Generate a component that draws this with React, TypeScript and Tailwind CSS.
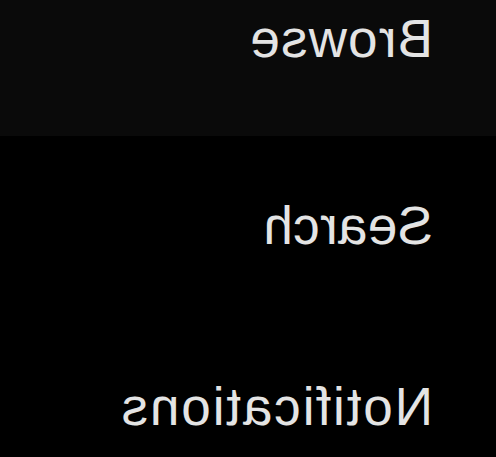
import React from 'react';

const items = [
  { label: 'Browse', active: true, className: 'h-[136px] pt-[9px] tracking-[1.2px]' },
  { label: 'Search', active: false, className: 'mt-[60px] tracking-[0.3px]' },
  { label: 'Notifications', active: false, className: 'mt-[121px] tracking-[1.9px]' },
];

export default function App() {
  return (
    <div
      className="min-h-screen w-full bg-black overflow-hidden"
      style={{ fontFamily: '"Liberation Sans", Arial, sans-serif' }}
    >
      {/* the whole menu is mirrored horizontally */}
      <ul className="-scale-x-100 flex flex-col">
        {items.map((item) => (
          <li
            key={item.label}
            className={`pl-[63px] text-[53px] leading-[60px] text-[#e4e4e4] whitespace-nowrap ${item.className} ${
              item.active ? 'bg-[#0a0a0a]' : ''
            }`}
          >
            {item.label}
          </li>
        ))}
      </ul>
    </div>
  );
}
